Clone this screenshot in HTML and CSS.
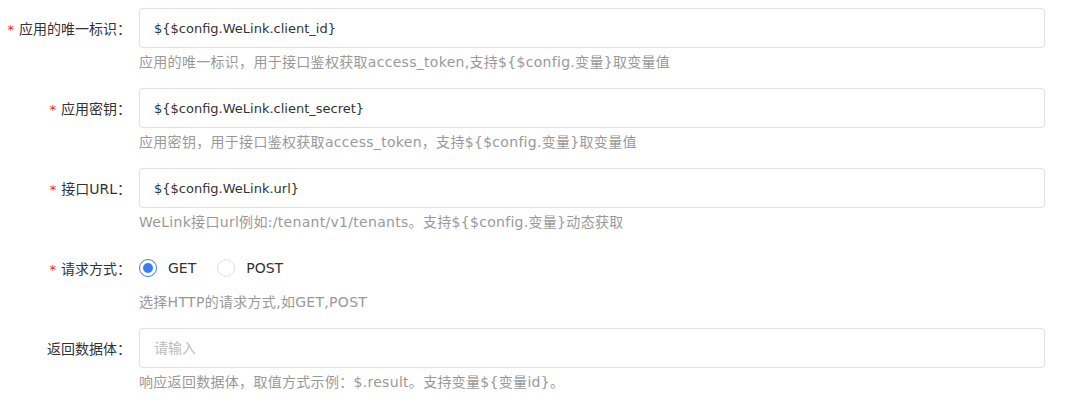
FILE: index.html
```html
<!DOCTYPE html>
<html lang="zh-CN">
<head>
<meta charset="utf-8">
<link rel="stylesheet" href="styles.css">
</head>
<body>
<form class="form">
  <div class="item">
    <div class="row">
      <label class="label required">应用的唯一标识：</label>
      <div class="control"><input class="input" value="${$config.WeLink.client_id}"></div>
    </div>
    <div class="help">应用的唯一标识，用于接口鉴权获取access_token,支持${$config.变量}取变量值</div>
  </div>
  <div class="item">
    <div class="row">
      <label class="label required">应用密钥：</label>
      <div class="control"><input class="input" value="${$config.WeLink.client_secret}"></div>
    </div>
    <div class="help">应用密钥，用于接口鉴权获取access_token，支持${$config.变量}取变量值</div>
  </div>
  <div class="item">
    <div class="row">
      <label class="label required">接口URL：</label>
      <div class="control"><input class="input" value="${$config.WeLink.url}"></div>
    </div>
    <div class="help">WeLink接口url例如:/tenant/v1/tenants。支持${$config.变量}动态获取</div>
  </div>
  <div class="item">
    <div class="row">
      <label class="label required">请求方式：</label>
      <div class="control radios">
        <label class="radio"><span class="dot checked"></span><span>GET</span></label>
        <label class="radio"><span class="dot"></span><span>POST</span></label>
      </div>
    </div>
    <div class="help">选择HTTP的请求方式,如GET,POST</div>
  </div>
  <div class="item">
    <div class="row">
      <label class="label">返回数据体：</label>
      <div class="control"><input class="input" placeholder="请输入"></div>
    </div>
    <div class="help">响应返回数据体，取值方式示例：$.result。支持变量${变量id}。</div>
  </div>
</form>
</body>
</html>
```
FILE: styles.css
```css
html, body {
  margin: 0;
  padding: 0;
  background: #fff;
}
body {
  font-family: "DejaVu Sans", "Noto Sans CJK SC", sans-serif;
  font-size: 14px;
  color: #333;
}
.form {
  padding: 8px 21px 0 0;
  display: flex;
  flex-direction: column;
  gap: 16px;
}
.row {
  display: flex;
  align-items: center;
  height: 40px;
}
.label {
  width: 131px;
  flex: none;
  box-sizing: border-box;
  padding-right: 0;
  text-align: right;
  color: #333;
  white-space: nowrap;
}
.required::before {
  content: "*";
  color: #f5222d;
  margin-right: 5px;
  font-size: 13px;
}
.control {
  flex: 1;
  margin-left: 8px;
  height: 40px;
}
.input {
  box-sizing: border-box;
  width: 100%;
  height: 40px;
  border: 1px solid #dcdfe6;
  border-radius: 4px;
  padding: 0 14px;
  font-family: "DejaVu Sans", "Noto Sans CJK SC", sans-serif;
  font-size: 13px;
  color: #333;
  outline: none;
}
.input::placeholder {
  color: #bbb;
  font-size: 14px;
}
.help {
  margin: 4px 0 0 139px;
  line-height: 20px;
  color: #999;
  white-space: nowrap;
  letter-spacing: 0.3px;
}
.radios {
  display: flex;
  align-items: center;
  gap: 21px;
}
.radio {
  display: flex;
  align-items: center;
  gap: 11px;
  color: #333;
}
.dot {
  width: 18px;
  height: 18px;
  box-sizing: border-box;
  border: 1px solid #dcdfe6;
  border-radius: 50%;
  background: #fff;
  display: inline-flex;
  align-items: center;
  justify-content: center;
}
.dot.checked {
  border-color: #3b7cf5;
}
.dot.checked::after {
  content: "";
  width: 10px;
  height: 10px;
  border-radius: 50%;
  background: #3b7cf5;
}
```
